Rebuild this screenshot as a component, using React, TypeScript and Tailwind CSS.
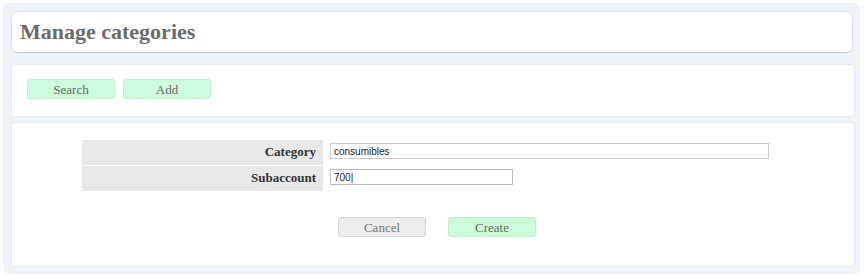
const App = () => {
  return (
    <div className="w-[864px] h-[279px] bg-white p-[3px] font-['Liberation_Serif',serif]">
      <div className="w-[857px] h-[271px] bg-[#eef3f9] rounded-[5px] pt-[8px] pl-[8px] pr-[5px] flex flex-col">
        <div className="w-[842px] h-[42px] bg-white border border-[#dde3ea] border-b-[#c8c8c8] rounded-[7px] flex items-center pl-[8px]">
          <h1 className="text-[22px] font-bold text-[#6b6b6b] leading-none">Manage categories</h1>
        </div>
        <div className="mt-[11px] w-[844px] h-[53px] bg-white border border-[#e6ebf1] rounded-[3px] flex items-start gap-[8px] pl-[15px] pt-[14px]">
          <button className="w-[88px] h-[20px] bg-[#ccfcd9] border border-[#c2ecd0] rounded-[3px] text-[13px] text-[#666] leading-none">
            Search
          </button>
          <button className="w-[88px] h-[20px] bg-[#ccfcd9] border border-[#c2ecd0] rounded-[3px] text-[13px] text-[#666] leading-none">
            Add
          </button>
        </div>
        <div className="mt-[5px] w-[844px] h-[145px] bg-white border border-[#e6ebf1] rounded-[3px] flex flex-col items-start pt-[17px] pl-[70px]">
          <div className="flex flex-col gap-[1px]">
            <div className="flex items-start">
              <div className="w-[241px] h-[25px] bg-[#e8e8e8] flex items-center justify-end pr-[7px] pb-[2px] text-[13px] font-bold text-[#333]">
                Category
              </div>
              <input
                className="ml-[7px] mt-[3px] w-[439px] h-[16px] border border-[#ccc] px-[3px] text-[10px] text-[#222] font-['Liberation_Sans',sans-serif] outline-none"
                defaultValue="consumibles"
              />
            </div>
            <div className="flex items-start">
              <div className="w-[241px] h-[25px] bg-[#e8e8e8] flex items-center justify-end pr-[7px] pb-[2px] text-[13px] font-bold text-[#333]">
                Subaccount
              </div>
              <input
                className="ml-[7px] mt-[3px] w-[183px] h-[16px] border border-[#bbb] px-[3px] text-[10px] text-[#222] font-['Liberation_Sans',sans-serif] outline-none"
                defaultValue="700|"
              />
            </div>
          </div>
          <div className="mt-[26px] ml-[256px] flex gap-[22px]">
            <button className="w-[88px] h-[20px] bg-[#ececec] border border-[#d4d4d4] rounded-[3px] text-[13px] text-[#777] leading-none">
              Cancel
            </button>
            <button className="w-[88px] h-[20px] bg-[#ccfcd9] border border-[#c2ecd0] rounded-[3px] text-[13px] text-[#666] leading-none">
              Create
            </button>
          </div>
        </div>
      </div>
    </div>
  );
};

export default App;
